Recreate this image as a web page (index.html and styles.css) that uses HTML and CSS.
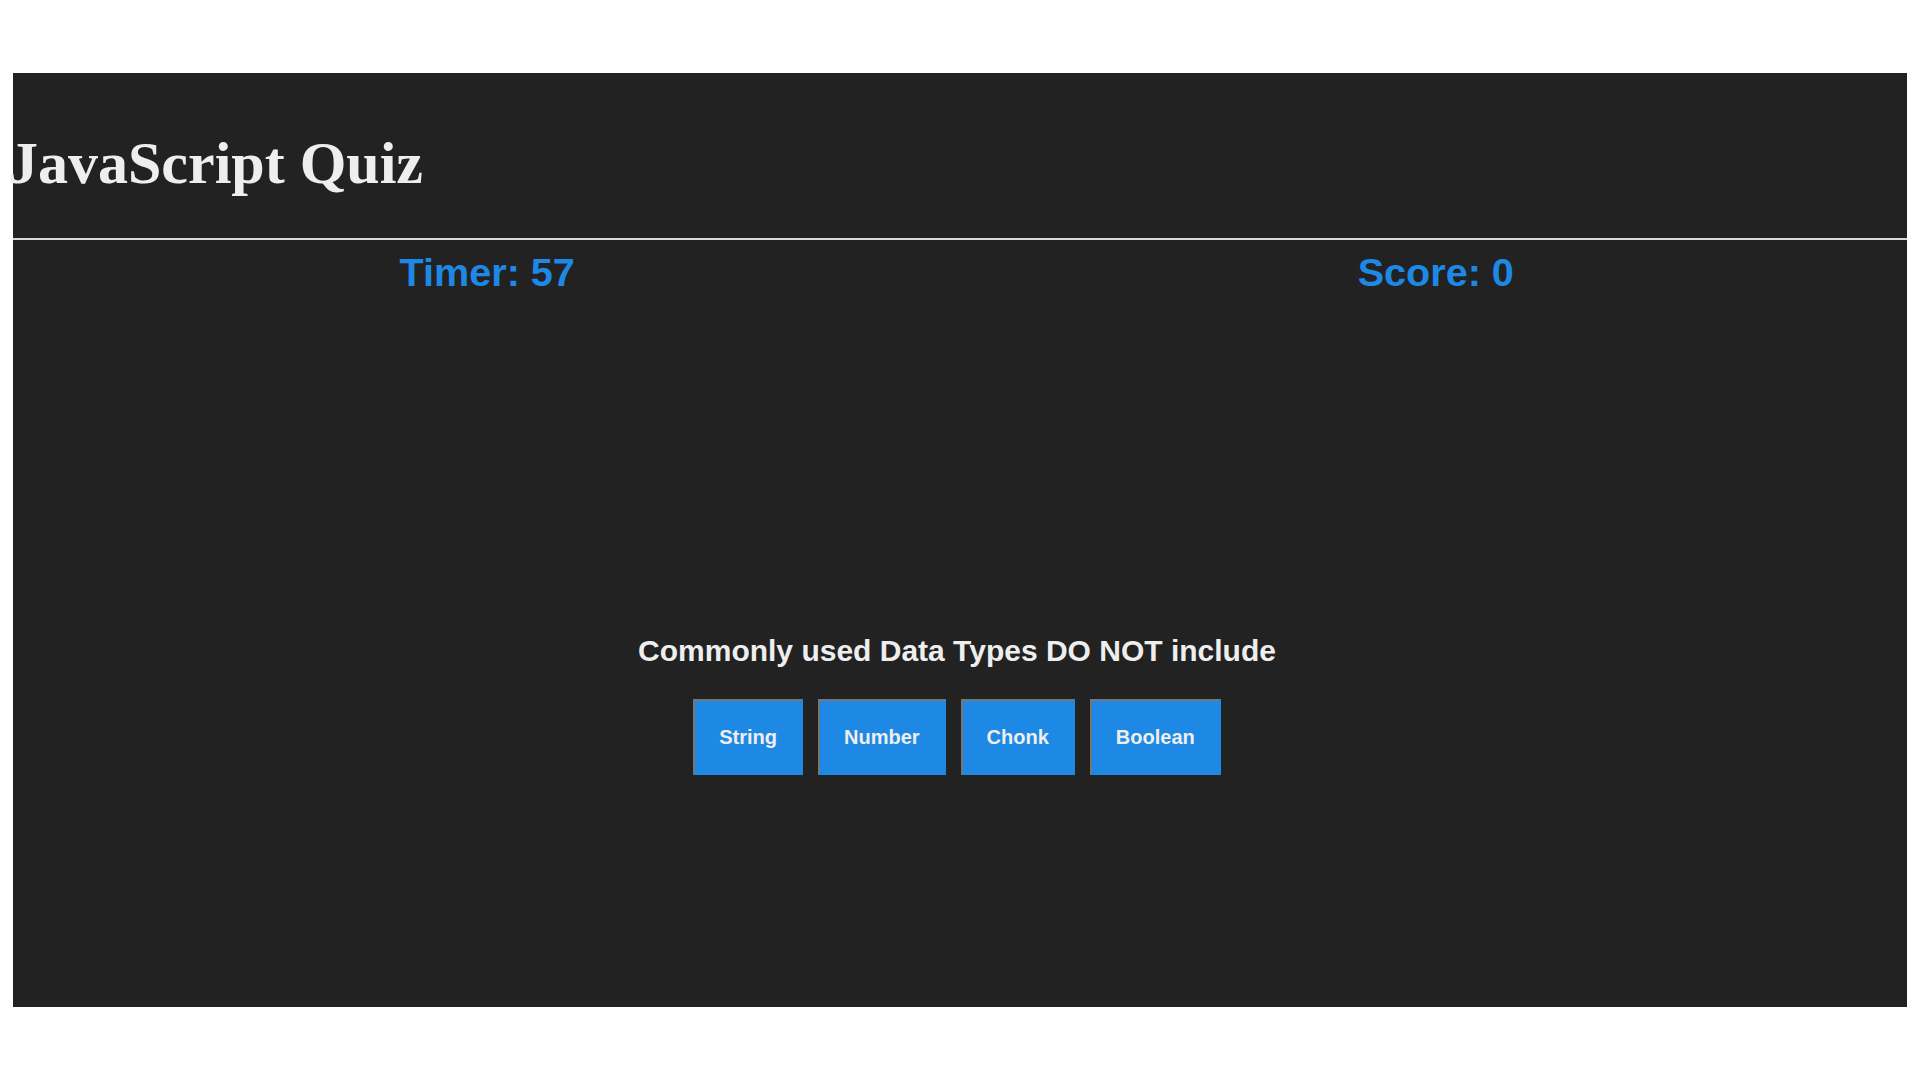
FILE: index.html
```html
<!DOCTYPE html>
<html lang="en">
<head>
<meta charset="utf-8">
<title>JavaScript Quiz</title>
<link rel="stylesheet" href="styles.css">
</head>
<body>
<div class="app">
  <header class="header">
    <h1 class="title">JavaScript Quiz</h1>
  </header>
  <div class="stats">
    <div class="stat">Timer: 57</div>
    <div class="stat stat--score">Score: 0</div>
  </div>
  <main class="quiz">
    <h2 class="question">Commonly used Data Types DO NOT include</h2>
    <div class="answers">
      <button class="answer">String</button>
      <button class="answer">Number</button>
      <button class="answer">Chonk</button>
      <button class="answer">Boolean</button>
    </div>
  </main>
</div>
</body>
</html>
```
FILE: styles.css
```css
html, body {
  background: #ffffff;
}
body {
  margin: 8px;
}
.app {
  margin: 65px 5px 0;
  background: #222222;
  height: 934px;
  color: #eeeeee;
  font-family: "Liberation Sans", Arial, sans-serif;
}
.header {
  padding-top: 16px;
  border-bottom: 2px solid #d8d8d8;
}
.title {
  margin: 40px 0 40px -5px;
  font-family: "Liberation Serif", "Times New Roman", serif;
  font-weight: bold;
  font-size: 60px;
  line-height: 69px;
  color: #eeeeee;
}
.stats {
  display: flex;
  padding-top: 10px;
  padding-left: 3px;
}
.stat {
  flex: 1;
  text-align: center;
  color: #1e88e5;
  font-weight: bold;
  font-size: 39.6px;
  line-height: 45px;
}
.stat--score {
  padding-left: 6px;
}
.quiz {
  display: flex;
  flex-direction: column;
  align-items: center;
  padding-top: 338px;
  padding-right: 6px;
}
.question {
  margin: 0;
  font-size: 30px;
  line-height: 35px;
  font-weight: bold;
  color: #eeeeee;
}
.answers {
  display: flex;
  gap: 15px;
  margin-top: 31px;
}
.answer {
  background: #1e88e5;
  color: #eeeeee;
  font-family: "Liberation Sans", Arial, sans-serif;
  font-weight: bold;
  font-size: 20px;
  line-height: 24px;
  padding: 24px;
  border: 2px solid;
  border-color: #767676 #1e88e5 #1e88e5 #767676;
  cursor: pointer;
}
```
